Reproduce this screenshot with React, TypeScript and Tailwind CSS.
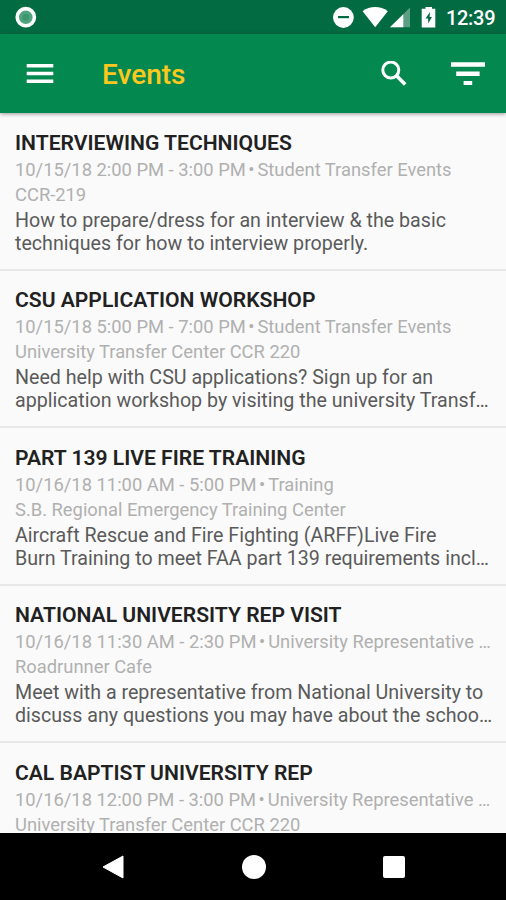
type CampusEvent = {
  title: string;
  time: string;
  category: string;
  location: string;
  description: string[];
};

const events: CampusEvent[] = [
  {
    title: "INTERVIEWING TECHNIQUES",
    time: "10/15/18 2:00 PM - 3:00 PM",
    category: "Student Transfer Events",
    location: "CCR-219",
    description: ["How to prepare/dress for an interview & the basic", "techniques for how to interview properly."],
  },
  {
    title: "CSU APPLICATION WORKSHOP",
    time: "10/15/18 5:00 PM - 7:00 PM",
    category: "Student Transfer Events",
    location: "University Transfer Center CCR 220",
    description: ["Need help with CSU applications? Sign up for an", "application workshop by visiting the university Transf…"],
  },
  {
    title: "PART 139 LIVE FIRE TRAINING",
    time: "10/16/18 11:00 AM - 5:00 PM",
    category: "Training",
    location: "S.B. Regional Emergency Training Center",
    description: ["Aircraft Rescue and Fire Fighting (ARFF)Live Fire", "Burn Training to meet FAA part 139 requirements incl…"],
  },
  {
    title: "NATIONAL UNIVERSITY REP VISIT",
    time: "10/16/18 11:30 AM - 2:30 PM",
    category: "University Representative …",
    location: "Roadrunner Cafe",
    description: ["Meet with a representative from National University to", "discuss any questions you may have about the schoo…"],
  },
  {
    title: "CAL BAPTIST UNIVERSITY REP",
    time: "10/16/18 12:00 PM - 3:00 PM",
    category: "University Representative …",
    location: "University Transfer Center CCR 220",
    description: [],
  },
];

function StatusBar() {
  return (
    <div className="flex h-[34px] shrink-0 items-center bg-[#036b41]">
      <svg className="h-[34px] w-[506px]" viewBox="0 0 506 34" fill="#fff">
        <circle cx="25.8" cy="17.2" r="8.6" fill="#50a580" stroke="#fff" strokeWidth="3.6" />
        <circle cx="25.8" cy="17.2" r="3.5" fill="#3d9670" />
        <circle cx="343.4" cy="17.5" r="10.4" />
        <rect x="338" y="16" width="11" height="2.2" fill="#036b41" />
        <path d="M362.6 11.3C369.8 5.7 380.6 5.7 387.8 11.3L375.2 27.3Z" />
        <path d="M390 27.3L410 7.5V27.3Z" opacity=".35" />
        <path d="M390 27.3L403.3 14.2V27.3Z" />
        <path d="M425.5 7H432V8.8H435.3V27.6H421.7V8.8H425.5Z" />
        <path d="M430 12L425.5 18.6H428.2V23.5L432 17H429.6Z" fill="#036b41" />
        <text x="446" y="25" fontSize="20" fontWeight="500" fontFamily="Roboto, sans-serif" textLength="49.5">12:39</text>
      </svg>
    </div>
  );
}

function AppBar() {
  return (
    <header className="relative z-10 flex h-[79px] shrink-0 items-center bg-[#038850] pr-[21px] pl-[26px] shadow-[0_1px_4px_rgba(0,0,0,0.4)]">
      <svg className="h-[20px] w-[28px]" viewBox="0 0 28 20" fill="#fff">
        <path d="M.7 0H27.3V3.5H.7ZM.7 7.8H27.3V11.3H.7ZM.7 15.5H27.3V19H.7Z" />
      </svg>
      <h1 className="ml-[48px] flex-1 pt-[3px] text-[28px] leading-8 font-medium text-[#fcc81e]">Events</h1>
      <svg className="mr-[44px] h-[26px] w-[26px]" viewBox="0 0 26 26" fill="none" stroke="#fff">
        <circle cx="9.8" cy="9" r="8" strokeWidth="3" />
        <path d="M15.3 14.5L24.2 23.5" strokeWidth="3.6" />
      </svg>
      <svg className="h-[24px] w-[34px]" viewBox="0 0 34 24" fill="#fff">
        <path d="M0 .3H34V4.8H0ZM5.2 9.6H28.6V14H5.2ZM12.6 18.9H21.2V23.1H12.6Z" />
      </svg>
    </header>
  );
}

function EventRow({ event }: { event: CampusEvent }) {
  return (
    <li className="h-[157.5px] shrink-0 border-b-2 border-[#e8e8e8] px-[15px] pt-[16.5px] whitespace-nowrap">
      <h2 className="text-[21.1px] leading-[26px] font-semibold text-[#212121]">{event.title}</h2>
      <p className="pt-px text-[18.35px] leading-[25px] text-[#b0b0b0]">
        {event.time}
        <span className="mr-[3px] ml-[2.5px]">•</span>
        {event.category}
      </p>
      <p className="text-[18.35px] leading-[25px] text-[#b0b0b0]">{event.location}</p>
      <div className="pt-[2px] text-[19.65px] leading-[23px] text-[#5a5a5a]">
        {event.description.map((line) => (
          <p key={line}>{line}</p>
        ))}
      </div>
    </li>
  );
}

function NavigationBar() {
  return (
    <nav className="flex h-[67px] shrink-0 items-center justify-between bg-black pr-[101px] pl-[102px]">
      <svg className="h-6 w-[22px]" viewBox="0 0 22 24" fill="#fff" stroke="#fff" strokeLinejoin="round">
        <path d="M1 12L21 1V23Z" />
      </svg>
      <div className="h-6 w-6 rounded-full bg-white" />
      <div className="h-[22px] w-[22px] rounded-[2px] bg-white" />
    </nav>
  );
}

export default function App() {
  return (
    <div className="flex h-[900px] w-[506px] flex-col overflow-hidden bg-[#fafafa] font-[Roboto,sans-serif]">
      <StatusBar />
      <AppBar />
      <ul className="flex min-h-0 flex-1 flex-col overflow-hidden">
        {events.map((event) => (
          <EventRow key={event.title} event={event} />
        ))}
      </ul>
      <NavigationBar />
    </div>
  );
}
